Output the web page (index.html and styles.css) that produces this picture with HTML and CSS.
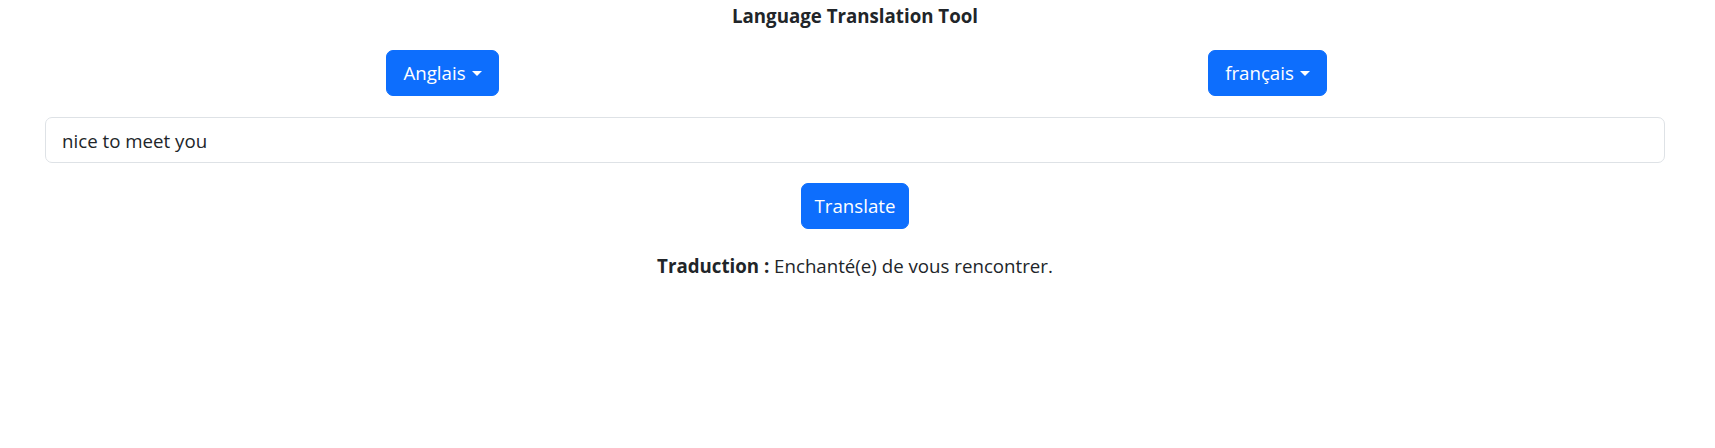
FILE: index.html
```html
<!DOCTYPE html>
<html lang="en">
<head>
<meta charset="utf-8">
<title>Language Translation Tool</title>
<link rel="stylesheet" href="styles.css">
</head>
<body>
<div class="app">
  <h1 class="title">Language Translation Tool</h1>
  <div class="selectors">
    <div class="col"><button class="btn dropdown-toggle" type="button">Anglais</button></div>
    <div class="col"><button class="btn dropdown-toggle" type="button">français</button></div>
  </div>
  <input class="text-input" type="text" value="nice to meet you">
  <div class="actions"><button class="btn btn-translate" type="button">Translate</button></div>
  <p class="result"><strong>Traduction :</strong> Enchanté(e) de vous rencontrer.</p>
</div>
</body>
</html>
```

FILE: styles.css
```css
* { box-sizing: border-box; }
body {
  margin: 0;
  background: #fff;
  color: #212529;
  font-family: "Open Sans", "Noto Sans", sans-serif;
}
.app {
  padding: 0 50px 0 45px;
}
.title {
  margin: 4px 0 0;
  font-size: 18.7px;
  line-height: 24px;
  font-weight: 700;
  text-align: center;
}
.selectors {
  display: flex;
  margin: 22px -15px 0;
}
.col {
  flex: 1 1 0;
  display: flex;
  justify-content: center;
}
.btn {
  height: 46px;
  padding: 0 16px;
  border: 1px solid #0d6efd;
  border-radius: 7px;
  background: #0d6efd;
  color: #fff;
  font-family: inherit;
  font-size: 18.7px;
  line-height: 44px;
  cursor: pointer;
}
.btn-translate {
  padding: 0 13px;
}
.dropdown-toggle::after {
  content: "";
  display: inline-block;
  margin-left: 6px;
  vertical-align: 4px;
  border-top: 5.5px solid #fff;
  border-left: 5px solid transparent;
  border-right: 5px solid transparent;
}
.text-input {
  display: block;
  width: 100%;
  height: 46px;
  margin-top: 21px;
  padding: 0 16px;
  border: 1px solid #dee2e6;
  border-radius: 7px;
  color: #212529;
  font-family: inherit;
  font-size: 18.7px;
  outline: none;
}
.actions {
  display: flex;
  justify-content: center;
  margin-top: 20px;
}
.result {
  margin: 25px 0 0;
  font-size: 18.7px;
  line-height: 24px;
  text-align: center;
}
```
